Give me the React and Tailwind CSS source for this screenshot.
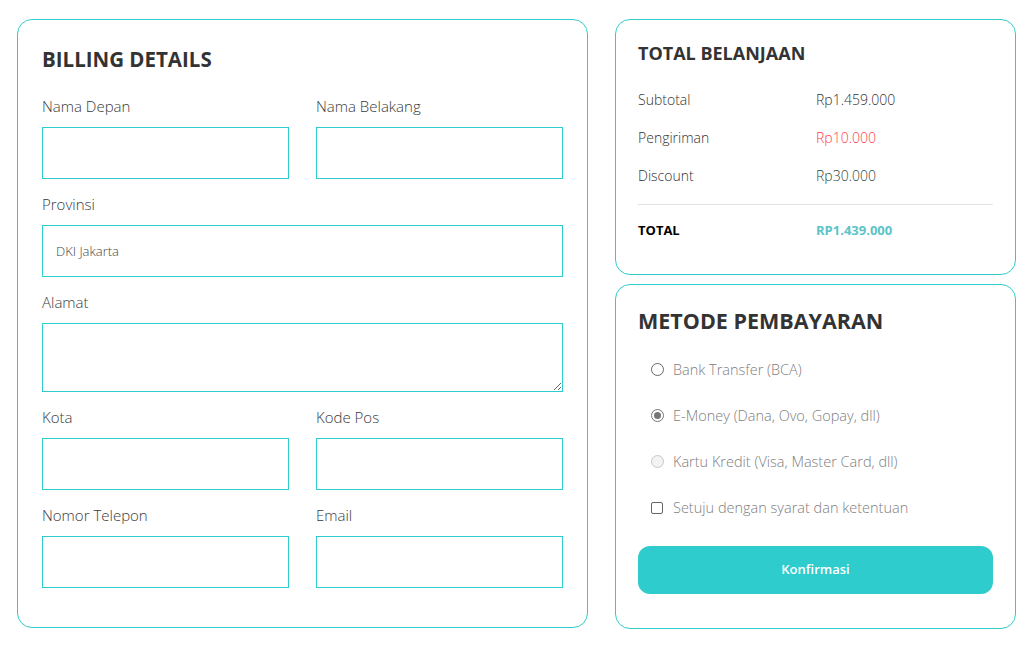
import React from 'react'

const font = { fontFamily: '"Open Sans", "Noto Sans", sans-serif' }

function Field({ label, className = '', children }) {
  return (
    <div className={className}>
      <label className="block text-[15px] leading-[21px] font-light text-[#3a3a3a] mb-[10px]">{label}</label>
      {children}
    </div>
  )
}

function TextBox({ value = '' }) {
  return (
    <input
      type="text"
      defaultValue={value}
      className="block w-full h-[52px] border border-[#2dcdcd] px-[13px] text-[13px] font-light text-[#444] outline-none"
    />
  )
}

function Radio({ state }) {
  if (state === 'checked') {
    return (
      <span className="w-[13px] h-[13px] rounded-full border border-[#777] flex items-center justify-center">
        <span className="w-[7px] h-[7px] rounded-full bg-[#777]" />
      </span>
    )
  }
  if (state === 'disabled') {
    return <span className="w-[13px] h-[13px] rounded-full border border-[#c8c8c8] bg-[#f3f3f3]" />
  }
  return <span className="w-[13px] h-[13px] rounded-full border border-[#666]" />
}

export default function App() {
  return (
    <div style={font} className="min-h-[647px] bg-white flex items-start gap-[27px] pl-[17px] pt-[19px]">
      {/* billing */}
      <div className="w-[571px] border border-[#2dcdcd] rounded-[15px] px-[24px] pt-[24px] pb-[39px]">
        <h2 className="text-[20.5px] leading-[30px] font-bold text-[#333] mb-[22px]">BILLING DETAILS</h2>
        <div className="grid grid-cols-2 gap-x-[27px] gap-y-[15px]">
          <Field label="Nama Depan"><TextBox /></Field>
          <Field label="Nama Belakang"><TextBox /></Field>
          <Field label="Provinsi" className="col-span-2"><TextBox value="DKI Jakarta" /></Field>
          <Field label="Alamat" className="col-span-2">
            <textarea className="block w-full h-[69px] border border-[#2dcdcd] px-[13px] py-[8px] text-[13px] outline-none" />
          </Field>
          <Field label="Kota"><TextBox /></Field>
          <Field label="Kode Pos"><TextBox /></Field>
          <Field label="Nomor Telepon"><TextBox /></Field>
          <Field label="Email"><TextBox /></Field>
        </div>
      </div>

      <div className="w-[401px] flex flex-col gap-[9px]">
        {/* totals */}
        <div className="border border-[#2dcdcd] rounded-[15px] px-[22px] pt-[20px] pb-[34px]">
          <h3 className="text-[18px] leading-[27px] font-bold text-[#333] mb-[22px]">TOTAL BELANJAAN</h3>
          <div className="grid grid-cols-[178px_1fr] gap-y-[17px] text-[14px] leading-[21px] font-light text-[#333]">
            <span>Subtotal</span>
            <span>Rp1.459.000</span>
            <span>Pengiriman</span>
            <span className="text-[#ff3b4a]">Rp10.000</span>
            <span>Discount</span>
            <span className="text-[#2f4a3a]">Rp30.000</span>
          </div>
          <div className="border-t border-[#e3e3e3] mt-[18px] pt-[15px] grid grid-cols-[178px_1fr] text-[13px] leading-[20px] font-bold">
            <span className="text-black">TOTAL</span>
            <span className="text-[#5bc4c8]">RP1.439.000</span>
          </div>
        </div>

        {/* payment */}
        <div className="border border-[#2dcdcd] rounded-[15px] px-[22px] pt-[21px] pb-[34px]">
          <h3 className="text-[21.5px] leading-[30px] font-bold text-[#333] mb-[23px]">METODE PEMBAYARAN</h3>
          <div className="flex flex-col gap-[25px] pl-[13px] text-[14.5px] leading-[21px] font-light text-[#808080]">
            <div className="flex items-center gap-[9px]">
              <Radio />
              <span>Bank Transfer (BCA)</span>
            </div>
            <div className="flex items-center gap-[9px]">
              <Radio state="checked" />
              <span>E-Money (Dana, Ovo, Gopay, dll)</span>
            </div>
            <div className="flex items-center gap-[9px]">
              <Radio state="disabled" />
              <span>Kartu Kredit (Visa, Master Card, dll)</span>
            </div>
            <div className="flex items-center gap-[10px]">
              <span className="w-[12px] h-[12px] rounded-[2px] border border-[#666]" />
              <span>Setuju dengan syarat dan ketentuan</span>
            </div>
          </div>
          <button className="mt-[28px] w-full h-[48px] rounded-[12px] bg-[#2ecccc] text-white text-[13px] font-semibold">
            Konfirmasi
          </button>
        </div>
      </div>
    </div>
  )
}
